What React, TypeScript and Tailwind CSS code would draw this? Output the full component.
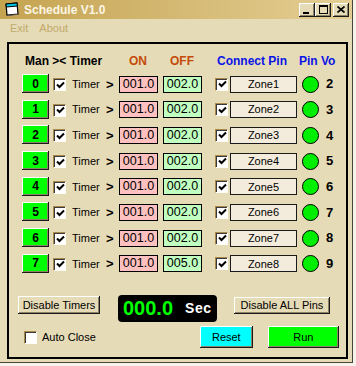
import React from "react";

const bevel =
  "shadow-[inset_-1px_-1px_0_#1a1a1a,inset_1px_1px_0_#ffffff,inset_-2px_-2px_0_#8c8266]";

function Check({ checked }: { checked: boolean }) {
  return (
    <div className="w-[13px] h-[13px] shrink-0 bg-white border-t border-l border-[#a8894a] border-b border-r border-b-[#fffdf5] border-r-[#fffdf5] shadow-[inset_1px_1px_0_#3a3a3a] flex items-center justify-center">
      {checked && (
        <svg width="9" height="9" viewBox="0 0 9 9" className="ml-[1px] mt-[1px]">
          <path d="M1 3.5 L3.5 6 L8 1.5" stroke="#000" strokeWidth="2" fill="none" />
        </svg>
      )}
    </div>
  );
}

const rows = [
  { off: "002.0", zone: "Zone1", pin: 2 },
  { off: "002.0", zone: "Zone2", pin: 3 },
  { off: "002.0", zone: "Zone3", pin: 4 },
  { off: "002.0", zone: "Zone4", pin: 5 },
  { off: "002.0", zone: "Zone5", pin: 6 },
  { off: "002.0", zone: "Zone6", pin: 7 },
  { off: "002.0", zone: "Zone7", pin: 8 },
  { off: "005.0", zone: "Zone8", pin: 9 },
];

export default function App() {
  return (
    <div className="w-[356px] h-[366px] bg-[#f4f2ea] overflow-hidden font-['Liberation_Sans',Arial,sans-serif] text-black">
      <div className="w-[353px] h-[363px] bg-[#e6dbb7] border-r border-b border-[#4a4538] flex flex-col">
        {/* Title bar */}
        <div className="h-[19px] flex items-center bg-gradient-to-r from-[#c5a450] to-[#e4ce94] pl-[4px] pr-[3px]">
          <svg width="17" height="15" viewBox="0 0 17 15" className="shrink-0">
            <path d="M2 2 L13 1 L14 12 L3 13 Z" fill="#fff" stroke="#000" strokeWidth="1.2" />
            <path d="M2 2 L13 1 L13.3 4 L2.3 5 Z" fill="#00c8e8" stroke="#000" strokeWidth="1" />
            <path d="M14 12 L15.5 12.5 L4 14 L3 13" fill="#5a5a5a" />
          </svg>
          <span className="ml-[3px] text-[12px] font-bold text-[#fbf6e4] leading-none">Schedule V1.0</span>
          <div className="ml-auto flex items-center">
            <div className={`w-[16px] h-[14px] bg-[#e6dbb7] ${bevel} flex items-end justify-center pb-[3px]`}>
              <div className="w-[6px] h-[2px] bg-black ml-[-2px]" />
            </div>
            <div className={`w-[16px] h-[14px] bg-[#e6dbb7] ${bevel} flex items-center justify-center`}>
              <div className="w-[9px] h-[9px] border border-black border-t-2 mb-[1px]" />
            </div>
            <div className={`ml-[2px] w-[16px] h-[14px] bg-[#e6dbb7] ${bevel} flex items-center justify-center`}>
              <svg width="8" height="7" viewBox="0 0 8 7" className="mb-[1px]">
                <path d="M0.5 0.5 L7.5 6.5 M7.5 0.5 L0.5 6.5" stroke="#000" strokeWidth="1.7" />
              </svg>
            </div>
          </div>
        </div>
        {/* Menu */}
        <div className="h-[19px] flex items-center text-[11px] text-[#c0aa6c]">
          <span className="ml-[10px]">Exit</span>
          <span className="ml-[11px]">About</span>
        </div>
        {/* Panel */}
        <div className="mt-[4px] ml-[7px] w-[341px] h-[317px] border-2 border-black flex flex-col">
          {/* Header */}
          <div className="mt-[10px] h-[14px] flex items-center text-[12px] font-bold leading-none">
            <span className="ml-[16px] w-[104px]">Man &gt;&lt; Timer</span>
            <span className="w-[41px] text-[#c44a08]">ON</span>
            <span className="w-[47px] text-[#c44a08]">OFF</span>
            <span className="w-[82px] text-[#0a14e6]">Connect Pin</span>
            <span className="text-[#0a14e6]">Pin Vo</span>
          </div>
          {/* Rows */}
          <div className="mt-[6px] flex flex-col gap-[6.7px]">
            {rows.map((r, i) => (
              <div key={i} className="h-[19px] flex items-center">
                <div className={`ml-[13px] w-[27px] h-[19px] bg-[#00ff00] ${bevel} flex items-center justify-center text-[12px] font-bold`}>
                  {i}
                </div>
                <div className="ml-[4px] mt-[2px]">
                  <Check checked />
                </div>
                <span className="ml-[6px] w-[34px] text-[11px] mt-[1px]">Timer</span>
                <span className="w-[13px] text-[13px] font-bold leading-none mt-[1px]">&gt;</span>
                <div className="w-[39px] h-[17px] bg-[#ffc0c0] border border-black flex items-center justify-center text-[12.5px] mt-[1px]">
                  001.0
                </div>
                <div className="ml-[5px] w-[39px] h-[17px] bg-[#c0ffc0] border border-black flex items-center justify-center text-[12.5px] mt-[1px]">
                  {r.off}
                </div>
                <div className="ml-[13px] mt-[1px]">
                  <Check checked />
                </div>
                <div className="ml-[2px] w-[67px] h-[17px] bg-[#f3ecdc] border border-[#1a1a1a] flex items-center justify-center text-[11px] mt-[1px]">
                  {r.zone}
                </div>
                <div className="ml-[5px] w-[17px] h-[17px] rounded-full bg-[#00ee00] border border-black mt-[1px]" />
                <span className="ml-[7px] text-[13px] font-bold mt-[1px]">{r.pin}</span>
              </div>
            ))}
          </div>
          {/* Bottom row 1 */}
          <div className="mt-[22px] flex items-start">
            <div className={`ml-[9px] mt-[1px] w-[82px] h-[18px] bg-[#e6dbb7] ${bevel} flex items-center justify-center text-[11px]`}>
              Disable Timers
            </div>
            <div className="ml-[18px] w-[99px] h-[27px] bg-black rounded-[4px] flex items-center">
              <span className="ml-[5px] text-[20px] font-bold text-[#00ff00] leading-none">000.0</span>
              <span className="ml-[12px] text-[14px] font-bold text-white leading-none tracking-[0.5px]">Sec</span>
            </div>
            <div className={`ml-[17px] mt-[2px] w-[96px] h-[17px] bg-[#e6dbb7] ${bevel} flex items-center justify-center text-[11px]`}>
              Disable ALL Pins
            </div>
          </div>
          {/* Bottom row 2 */}
          <div className="mt-[4px] h-[22px] flex items-center">
            <div className="ml-[15px] mt-[2px]">
              <Check checked={false} />
            </div>
            <span className="ml-[5px] text-[11px] mt-[1px]">Auto Close</span>
            <div className={`ml-[104px] w-[53px] h-[22px] bg-[#00ffff] ${bevel} flex items-center justify-center text-[11px]`}>
              Reset
            </div>
            <div className={`ml-[15px] w-[71px] h-[22px] bg-[#00ff00] ${bevel} flex items-center justify-center text-[11px]`}>
              Run
            </div>
          </div>
        </div>
      </div>
    </div>
  );
}
